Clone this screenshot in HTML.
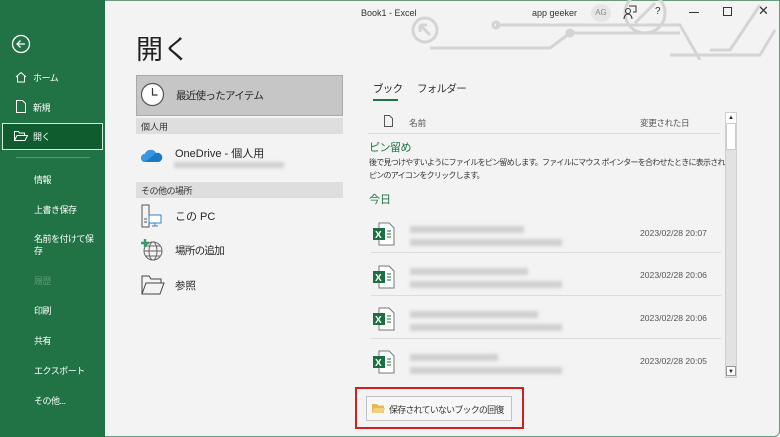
<!DOCTYPE html>
<html><head><meta charset="utf-8"><style>
*{margin:0;padding:0;box-sizing:border-box}
body{width:780px;height:437px;overflow:hidden;background:#f3f3f3;font-family:"Liberation Sans","Noto Sans CJK JP",sans-serif;position:relative;color:#262626}
.a{position:absolute;white-space:nowrap}
#side{position:absolute;left:0;top:0;width:105px;height:437px;background:#217346;color:#fff;font-size:9px;letter-spacing:-0.5px}
.blur{position:absolute;background:#d0d0d0;filter:blur(1.5px);height:7px}
.date{font-size:8.6px;color:#555}
.j{letter-spacing:-0.7px}
</style></head><body>
<div style="position:absolute;inset:0;border:1px solid #6a9a7e;border-radius:0 0 6px 6px;pointer-events:none"></div>
<div id="side">
<svg class="a" style="left:11px;top:34px" width="20" height="20"><circle cx="10" cy="10" r="8.5" fill="none" stroke="#fff" stroke-width="1.3"/><path d="M14 10H6M9.5 6.5L6 10l3.5 3.5" fill="none" stroke="#fff" stroke-width="1.3"/></svg>
<svg class="a" style="left:15px;top:71px" width="12" height="12"><path d="M1 6L6 1.5 11 6M2.5 5v6h7V5" fill="none" stroke="#fff"/></svg>
<div class="a" style="left:33px;top:71px">ホーム</div>
<svg class="a" style="left:16px;top:100px" width="10" height="13"><path d="M.5.5h6l3 3v9h-9z" fill="none" stroke="#fff"/></svg>
<div class="a" style="left:33px;top:101px">新規</div>
<div class="a" style="left:2px;top:123px;width:101px;height:27px;background:#0f5c2e;border:1px solid #d8e8dc"></div>
<svg class="a" style="left:14px;top:131px" width="14" height="10"><path d="M.5 9.5V.5h4l1 1.5h5v2M.5 9.5l2.5-5h10.5l-2.5 5z" fill="none" stroke="#fff"/></svg>
<div class="a" style="left:33px;top:130px">開く</div>
<div class="a" style="left:16px;top:157px;width:74px;height:1px;background:#5a9a72"></div>
<div class="a" style="left:34px;top:173px">情報</div>
<div class="a" style="left:34px;top:203px">上書き保存</div>
<div class="a" style="left:34px;top:233px;line-height:12px">名前を付けて保<br>存</div>
<div class="a" style="left:34px;top:274px;color:#5c9a74">履歴</div>
<div class="a" style="left:34px;top:304px">印刷</div>
<div class="a" style="left:34px;top:334px">共有</div>
<div class="a" style="left:34px;top:364px">エクスポート</div>
<div class="a" style="left:34px;top:394px">その他...</div>
</div>
<svg class="a" style="left:380px;top:0" width="400" height="60" fill="none" stroke="#d4d4d4" stroke-width="3"><circle cx="45" cy="30" r="12"/><path d="M40 25l10 10M40 25v7M40 25h7"/><path d="M116 25H300l20 35"/><circle cx="116" cy="25" r="3"/><path d="M50 48H170l20-15H300"/><circle cx="265" cy="13" r="20"/><path d="M255 23l20-20"/><path d="M330 50H350l30-45"/><path d="M290 55H380l15-25"/><circle cx="190" cy="33" r="3"/></svg>
<div class="a" style="left:361px;top:8px;font-size:9px;color:#333">Book1 - Excel</div>
<div class="a" style="left:532px;top:8px;font-size:9px;color:#333">app geeker</div>
<div class="a" style="left:591px;top:4px;width:20px;height:18px;border-radius:50%;background:#e6e6e6;font-size:8px;color:#888;text-align:center;line-height:18px">AG</div>
<svg class="a" style="left:623px;top:5px" width="14" height="15" fill="none" stroke="#333"><circle cx="5" cy="6" r="2.5"/><path d="M1 14c0-3 2-5 4-5s4 2 4 5M6 1h7v6h-3"/></svg>
<div class="a" style="left:655px;top:6px;font-size:10px;color:#333">?</div>
<div class="a" style="left:689px;top:12px;width:10px;height:1px;background:#333"></div>
<div class="a" style="left:723px;top:7px;width:9px;height:9px;border:1px solid #333"></div>
<div class="a" style="left:758px;top:3px;font-size:13px;color:#333">✕</div>
<div class="a" style="left:136px;top:28px;font-size:27px;color:#222">開く</div>
<div class="a" style="left:136px;top:75px;width:207px;height:41px;background:#c6c6c6;border:1px solid #a9a9a9"></div>
<svg class="a" style="left:140px;top:82px" width="25" height="25"><circle cx="12.5" cy="12.5" r="11" fill="#fff" stroke="#555" stroke-width="1.2"/><path d="M12.5 6v7h5" fill="none" stroke="#333" stroke-width="1.2"/></svg>
<div class="a j" style="left:176px;top:88px;font-size:10.5px">最近使ったアイテム</div>
<div class="a" style="left:136px;top:118px;width:207px;height:16px;background:#dedede;font-size:9px;padding:2px 5px;color:#333">個人用</div>
<svg class="a" style="left:141px;top:148px" width="22" height="15"><path d="M4 14a4 4 0 010-8 6 6 0 0111-1 4.5 4.5 0 013 9z" fill="#1f77c9"/><path d="M4 14a4 4 0 010-8 6 6 0 0111-1" fill="#3a96e0"/></svg>
<div class="a" style="left:175px;top:145px;font-size:11px">OneDrive - 個人用</div>
<div class="blur" style="left:174px;top:162px;width:110px;height:6px"></div>
<div class="a" style="left:136px;top:182px;width:207px;height:16px;background:#dedede;font-size:9px;padding:2px 5px;color:#333;letter-spacing:-0.5px">その他の場所</div>
<svg class="a" style="left:140px;top:204px" width="24" height="24" fill="none" stroke="#555"><path d="M2 1h7v22H2zM4 15h3M4 18h3"/><rect x="9" y="11" width="12" height="8" fill="#fff" stroke="#3b82c4"/><path d="M15 19v3M12 22h6" stroke="#3b82c4"/></svg>
<div class="a" style="left:175px;top:208px;font-size:11px">この PC</div>
<svg class="a" style="left:140px;top:238px" width="24" height="24" fill="none" stroke="#666"><circle cx="13" cy="13" r="9"/><ellipse cx="13" cy="13" rx="4" ry="9"/><path d="M4 13h18M6 8h14M6 18h14"/><path d="M5 1v8M1 5h8" stroke="#3a9a6a" stroke-width="2.4"/></svg>
<div class="a j" style="left:175px;top:243px;font-size:10.5px">場所の追加</div>
<svg class="a" style="left:141px;top:275px" width="24" height="20" fill="none" stroke="#444"><path d="M1 19V1h7l2 3h10v4M1 19l4-11h18l-4 11z"/></svg>
<div class="a" style="left:175px;top:278px;font-size:10.5px">参照</div>
<div class="a j" style="left:373px;top:81px;font-size:10.5px;color:#222">ブック</div>
<div class="a" style="left:373px;top:99px;width:25px;height:2px;background:#217346"></div>
<div class="a j" style="left:417px;top:81px;font-size:10.5px;color:#333">フォルダー</div>
<svg class="a" style="left:384px;top:115px" width="9" height="12" fill="none" stroke="#555"><path d="M.5.5h5l3 3v8h-8z"/></svg>
<div class="a" style="left:409px;top:117px;font-size:8.6px;color:#555">名前</div>
<div class="a" style="left:640px;top:117px;font-size:8.6px;color:#555;letter-spacing:-0.4px">変更された日</div>
<div class="a" style="left:368px;top:133px;width:352px;height:1px;background:#dcdcdc"></div>
<div class="a" style="left:369px;top:139px;font-size:11px;color:#217346;letter-spacing:-0.5px">ピン留め</div>
<div class="a" style="left:369px;top:156px;font-size:8px;color:#333;line-height:13px;letter-spacing:-0.75px">後で見つけやすいようにファイルをピン留めします。ファイルにマウス ポインターを合わせたときに表示される<br>ピンのアイコンをクリックします。</div>
<div class="a" style="left:369px;top:191px;font-size:11px;color:#217346">今日</div>
<div class="a" style="left:725px;top:112px;width:12px;height:266px;background:#e2e2e2;border:1px solid #cfcfcf"></div>
<div class="a" style="left:726px;top:113px;width:10px;height:10px;background:#fff;font-size:6px;text-align:center;line-height:10px">▲</div>
<div class="a" style="left:726px;top:123px;width:10px;height:27px;background:#fff;border:1px solid #ccc"></div>
<div class="a" style="left:726px;top:366px;width:10px;height:10px;background:#fff;font-size:6px;text-align:center;line-height:10px;border:1px solid #999">▼</div>
<div class="a" style="left:372px;top:222px"><svg width="24" height="24"><path d="M7 1h10l5 5v17H7z" fill="#fff" stroke="#777"/><rect x="1" y="6" width="12" height="12" fill="#1d6f42"/><text x="3" y="16" font-size="10" font-weight="bold" fill="#fff" font-family="Liberation Sans">X</text><path d="M15 9h4M15 12h4M15 15h4" stroke="#1d6f42"/></svg></div>
<div class="blur" style="left:410px;top:226px;width:114px"></div><div class="blur" style="left:410px;top:239px;width:152px"></div>
<div class="a date" style="left:640px;top:228px">2023/02/28 20:07</div>
<div class="a" style="left:371px;top:252px;width:350px;height:1px;background:#dcdcdc"></div>
<div class="a" style="left:372px;top:265px"><svg width="24" height="24"><path d="M7 1h10l5 5v17H7z" fill="#fff" stroke="#777"/><rect x="1" y="6" width="12" height="12" fill="#1d6f42"/><text x="3" y="16" font-size="10" font-weight="bold" fill="#fff" font-family="Liberation Sans">X</text><path d="M15 9h4M15 12h4M15 15h4" stroke="#1d6f42"/></svg></div>
<div class="blur" style="left:410px;top:268px;width:118px"></div><div class="blur" style="left:410px;top:281px;width:152px"></div>
<div class="a date" style="left:640px;top:270px">2023/02/28 20:06</div>
<div class="a" style="left:371px;top:295px;width:350px;height:1px;background:#dcdcdc"></div>
<div class="a" style="left:372px;top:307px"><svg width="24" height="24"><path d="M7 1h10l5 5v17H7z" fill="#fff" stroke="#777"/><rect x="1" y="6" width="12" height="12" fill="#1d6f42"/><text x="3" y="16" font-size="10" font-weight="bold" fill="#fff" font-family="Liberation Sans">X</text><path d="M15 9h4M15 12h4M15 15h4" stroke="#1d6f42"/></svg></div>
<div class="blur" style="left:410px;top:311px;width:128px"></div><div class="blur" style="left:410px;top:324px;width:152px"></div>
<div class="a date" style="left:640px;top:313px">2023/02/28 20:06</div>
<div class="a" style="left:371px;top:338px;width:350px;height:1px;background:#dcdcdc"></div>
<div class="a" style="left:372px;top:350px"><svg width="24" height="24"><path d="M7 1h10l5 5v17H7z" fill="#fff" stroke="#777"/><rect x="1" y="6" width="12" height="12" fill="#1d6f42"/><text x="3" y="16" font-size="10" font-weight="bold" fill="#fff" font-family="Liberation Sans">X</text><path d="M15 9h4M15 12h4M15 15h4" stroke="#1d6f42"/></svg></div>
<div class="blur" style="left:410px;top:354px;width:88px"></div><div class="blur" style="left:410px;top:367px;width:152px"></div>
<div class="a date" style="left:640px;top:356px">2023/02/28 20:05</div>
<div class="a" style="left:355px;top:387px;width:169px;height:42px;border:2px solid #d01f1f"></div>
<div class="a" style="left:366px;top:396px;width:146px;height:25px;border:1px solid #c2c2c2;background:#f7f7f7"></div>
<svg class="a" style="left:372px;top:403px" width="13" height="10"><path d="M0 1h5l1 1.5h6V10H0z" fill="#e8b65a"/><path d="M0 10l2-5h11l-2 5z" fill="#f4cf7e"/></svg>
<div class="a" style="left:389px;top:403px;font-size:9px;color:#333;letter-spacing:-0.8px">保存されていないブックの回復</div>
</body></html>
